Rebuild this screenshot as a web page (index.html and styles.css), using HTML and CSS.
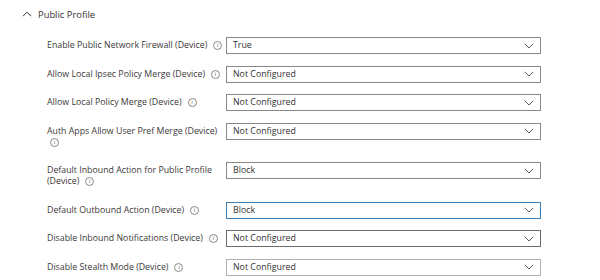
FILE: index.html
```html
<!DOCTYPE html>
<html>
<head>
<meta charset="utf-8">
<link rel="stylesheet" href="styles.css">
</head>
<body>
<div class="page">
  <div class="section-head">
    <svg class="chev-up" width="10" height="6" viewBox="0 0 10 6"><path d="M1 5.2 L5 1.2 L9 5.2" fill="none" stroke="#323130" stroke-width="1"/></svg>
    <span>Public Profile</span>
  </div>
  <div class="rows">
    <div class="row">
      <div class="label">Enable Public Network Firewall (Device)<span class="info">i</span></div>
      <div class="select"><span>True</span><svg class="chev" width="10" height="6" viewBox="0 0 10 6"><path d="M0.8 0.8 L5 5 L9.2 0.8" fill="none" stroke="#605e5c" stroke-width="1"/></svg></div>
    </div>
    <div class="row">
      <div class="label">Allow Local Ipsec Policy Merge (Device)<span class="info">i</span></div>
      <div class="select"><span>Not Configured</span><svg class="chev" width="10" height="6" viewBox="0 0 10 6"><path d="M0.8 0.8 L5 5 L9.2 0.8" fill="none" stroke="#605e5c" stroke-width="1"/></svg></div>
    </div>
    <div class="row">
      <div class="label">Allow Local Policy Merge (Device)<span class="info">i</span></div>
      <div class="select"><span>Not Configured</span><svg class="chev" width="10" height="6" viewBox="0 0 10 6"><path d="M0.8 0.8 L5 5 L9.2 0.8" fill="none" stroke="#605e5c" stroke-width="1"/></svg></div>
    </div>
    <div class="row">
      <div class="label multi"><span class="line">Auth Apps Allow User Pref Merge (Device)</span><span class="line"><span class="info nl">i</span></span></div>
      <div class="select"><span>Not Configured</span><svg class="chev" width="10" height="6" viewBox="0 0 10 6"><path d="M0.8 0.8 L5 5 L9.2 0.8" fill="none" stroke="#605e5c" stroke-width="1"/></svg></div>
    </div>
    <div class="row">
      <div class="label multi"><span class="line">Default Inbound Action for Public Profile</span><span class="line">(Device)<span class="info">i</span></span></div>
      <div class="select"><span>Block</span><svg class="chev" width="10" height="6" viewBox="0 0 10 6"><path d="M0.8 0.8 L5 5 L9.2 0.8" fill="none" stroke="#605e5c" stroke-width="1"/></svg></div>
    </div>
    <div class="row">
      <div class="label">Default Outbound Action (Device)<span class="info">i</span></div>
      <div class="select focus"><span>Block</span><svg class="chev" width="10" height="6" viewBox="0 0 10 6"><path d="M0.8 0.8 L5 5 L9.2 0.8" fill="none" stroke="#605e5c" stroke-width="1"/></svg></div>
    </div>
    <div class="row">
      <div class="label">Disable Inbound Notifications (Device)<span class="info">i</span></div>
      <div class="select dark"><span>Not Configured</span><svg class="chev" width="10" height="6" viewBox="0 0 10 6"><path d="M0.8 0.8 L5 5 L9.2 0.8" fill="none" stroke="#605e5c" stroke-width="1"/></svg></div>
    </div>
    <div class="row">
      <div class="label">Disable Stealth Mode (Device)<span class="info">i</span></div>
      <div class="select light"><span>Not Configured</span><svg class="chev" width="10" height="6" viewBox="0 0 10 6"><path d="M0.8 0.8 L5 5 L9.2 0.8" fill="none" stroke="#605e5c" stroke-width="1"/></svg></div>
    </div>
  </div>
</div>
</body>
</html>
```
FILE: styles.css
```css
* { box-sizing: border-box; }
html, body { margin: 0; padding: 0; background: #fff; }
body {
  font-family: "Open Sans", "Noto Sans", sans-serif;
  font-size: 8.8px;
  color: #323130;
}
.page { padding: 7px 0 0 22px; }
.section-head {
  display: flex;
  align-items: center;
  gap: 6px;
  height: 14px;
  font-size: 9.4px;
}
.rows {
  display: flex;
  flex-direction: column;
  gap: 11.5px;
  padding: 16px 0 0 25px;
}
.row {
  display: flex;
  align-items: flex-start;
}
.label {
  width: 179px;
  display: flex;
  flex-direction: row;
  align-items: center;
  justify-content: flex-start;
  min-height: 17px;
  padding: 3px 4px 3px 0;
  color: #3b3a39;
  white-space: nowrap;
  line-height: 11px;
}
.label.multi {
  flex-direction: column;
  align-items: flex-start;
}
.line {
  display: flex;
  align-items: center;
  height: 11px;
}
.info {
  display: inline-block;
  flex-shrink: 0;
  width: 9px;
  height: 9px;
  border: 1px solid #8a8886;
  border-radius: 50%;
  font-size: 6px;
  line-height: 7px;
  text-align: center;
  color: #605e5c;
  margin-left: 6px;
}
.info.nl { margin-left: 3px; }
.select {
  width: 315px;
  height: 17px;
  border: 1px solid #8a8886;
  display: flex;
  align-items: center;
  justify-content: space-between;
  padding: 0 6px 0 6px;
  line-height: 15px;
  color: #323130;
  flex-shrink: 0;
}
.select.focus { border: 1.5px solid #3b7fb8; }
.select.dark { border-color: #6e6c6a; }
.select.light { border-color: #b3b0ad; }
.chev { flex-shrink: 0; }
```
